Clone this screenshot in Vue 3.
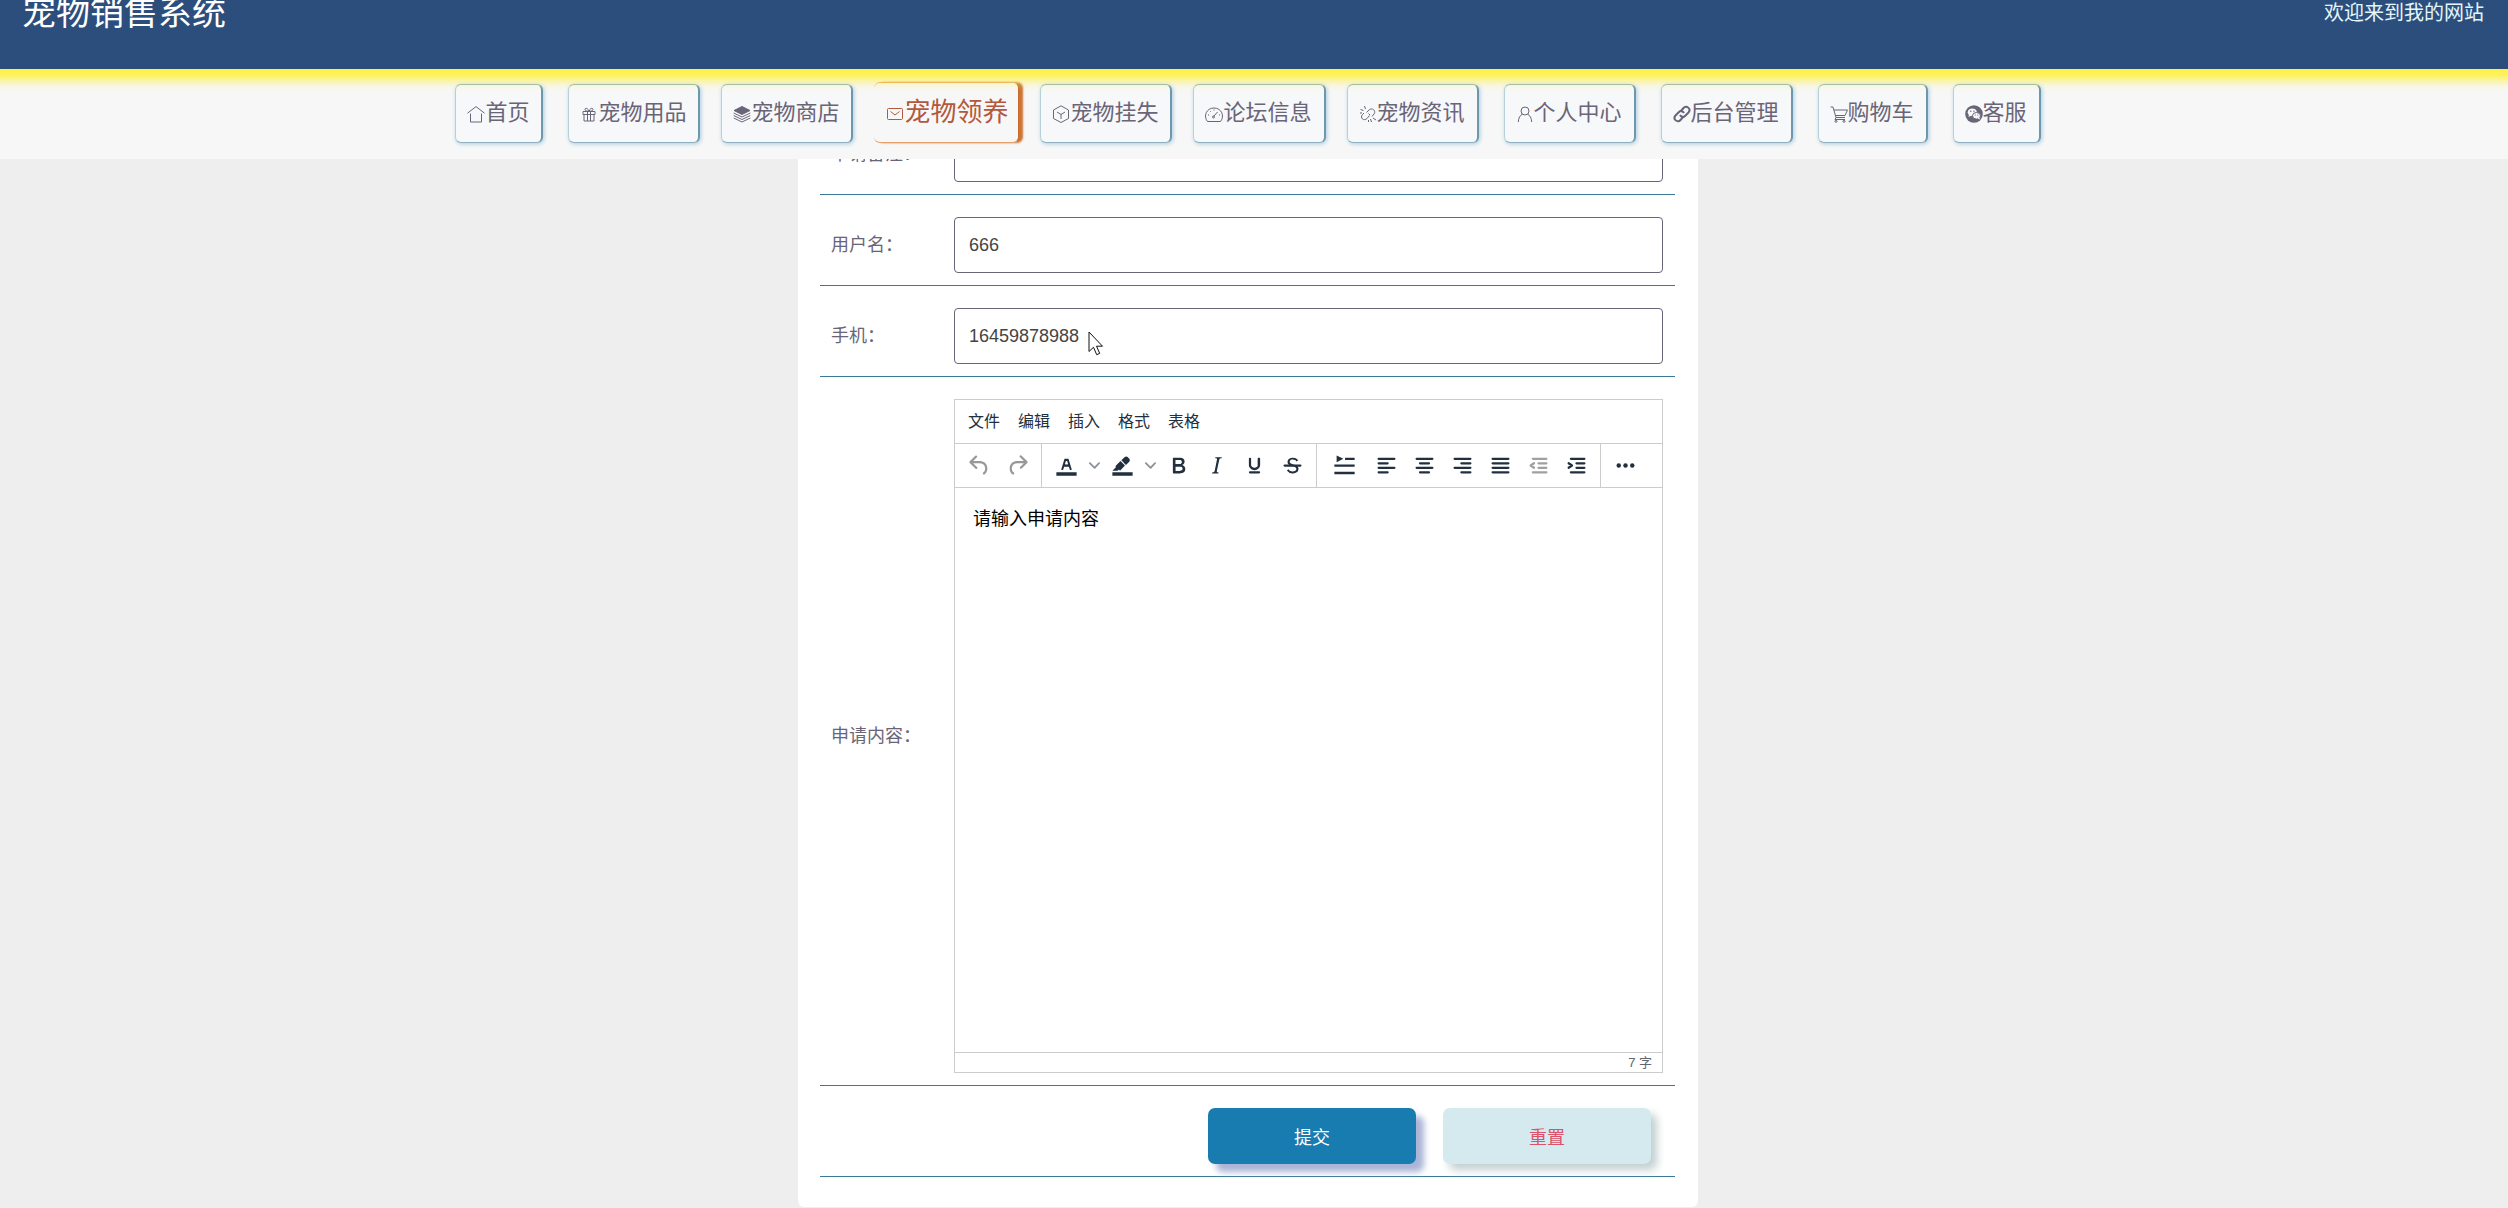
<script setup>
import { ref } from 'vue'

const nav = [
  { text: '首页', icon: 'home' },
  { text: '宠物用品', icon: 'gift' },
  { text: '宠物商店', icon: 'layers', near: true },
  { text: '宠物领养', icon: 'mail', near: true, active: true },
  { text: '宠物挂失', icon: 'box', near: true },
  { text: '论坛信息', icon: 'gauge', near: true },
  { text: '宠物资讯', icon: 'unlink', near: true },
  { text: '个人中心', icon: 'user' },
  { text: '后台管理', icon: 'link' },
  { text: '购物车', icon: 'cart' },
  { text: '客服', icon: 'chat' },
]

const icons = {
  home: '<path d="M.5 8.2 9 1.6l8.500 6.600M3.500 8.600V17h11V8.600"/>',
  gift: '<path d="M3 6.500h12v3H3zM4 9.500h10V16H4zM7.500 6.500V16M10.500 6.500V16M9 6.200C8 3 5 2.500 5 4.500c0 1.300 2 1.700 4 1.700 2 0 4-.4 4-1.700C13 2.500 10 3 9 6.200z"/>',
  layers: '<path fill="currentColor" d="M9 1.500 17 5.500 9 9.500 1 5.500z"/><path d="M.7 8 9 12l8.300-4M.7 10.500 9 14.500l8.300-4M.7 13 9 17l8.300-4"/>',
  mail: '<path d="M2.500 4.500h13a1 1 0 0 1 1 1v9a1 1 0 0 1-1 1h-13a1 1 0 0 1-1-1v-9a1 1 0 0 1 1-1zM4.500 7.500 9 11l4.500-3.500"/>',
  box: '<path d="M9 .8 16.500 5v8.500L9 17.500 1.500 13.500V5zM5 7l4 2.500L13 7M9 9.500v4.500"/>',
  gauge: '<path d="M2.500 16.500C-2 11 1.500 3 9 3s11 8 6.500 13.500zM8.500 11.500l4-4.500M9.500 12a1 1 0 1 1-2 0 1 1 0 0 1 2 0M3 10h1M5 6l.7.7M9 4.500v1M15 10h-1"/>',
  unlink: '<path d="M7.500 7.500 10 5c3-3 7.500 1 5 4l-2 2.500M10.500 10.500 8 13.500c-3 3-7.500-.5-4.500-4L5 8M9.500 8.500 11 10M5.500 1l1 3M1.500 4.500l3 1M1 8h2M11.500 14l1 3M14 13l3 2M9.500 15v2"/>',
  user: '<path d="M13 6a4 4 0 1 1-8 0 4 4 0 0 1 8 0M6.300 9.200C4 10.500 2.500 13 2.300 17M11.700 9.200c2.300 1.300 3.800 3.800 4 7.800"/>',
  link: '<g stroke-width="2"><path d="M7.500 6.500 10.500 3c3-3.500 8 1 5 4.500l-3.500 3.500c-1.500 1.500-4 1-5-1"/><path d="M10.500 11.500 7.500 15c-3 3.500-8-1-5-4.500L6 7c1.500-1.500 4-1 5 1"/></g>',
  cart: '<path d="M.5 2H3l3 10.500h9M3.800 5H17.500L15 10.500H5.500M6 12.500l-1 2h10"/><circle cx="6" cy="16.300" r="1"/><circle cx="14" cy="16.300" r="1"/>',
  chat: '<circle cx="9" cy="9" r="8.800" fill="currentColor" stroke="none"/><g fill="#f7f8f9" stroke="none"><ellipse cx="7.300" cy="7.300" rx="4.600" ry="3.800"/><path d="m4 9-.5 3 3-1.500z"/></g><ellipse cx="11.500" cy="10.800" rx="4" ry="3.300" fill="#f7f8f9"/><path fill="#f7f8f9" stroke="none" d="m12.500 13.500 2.500 1-.5-2z"/><g fill="currentColor" stroke="none"><circle cx="5.800" cy="6.300" r=".7"/><circle cx="9" cy="6.300" r=".7"/><circle cx="10.300" cy="10" r=".6"/><circle cx="12.800" cy="10" r=".6"/></g>',
}

const line = (d) => `<path d="${d}" fill="none" stroke="currentColor" stroke-width="2" stroke-linecap="round" stroke-linejoin="round"/>`
const glyph = {
  undo: '<path d="M6.400 8H12c3.700 0 6.200 2 6.800 5.100.6 2.700-.4 5.600-2.300 6.800a1 1 0 0 1-1-1.800c1.100-.6 1.800-2.700 1.400-4.600-.5-2.100-2.100-3.500-4.900-3.500H6.400l3.300 3.300a1 1 0 1 1-1.400 1.400l-5-5a1 1 0 0 1 0-1.400l5-5a1 1 0 0 1 1.400 1.400L6.400 8z"/>',
  redo: '<path d="M17.600 10H12c-2.800 0-4.400 1.400-4.900 3.500-.4 2 .3 4 1.400 4.600a1 1 0 1 1-1 1.800c-2-1.200-2.900-4.100-2.300-6.800.6-3 3-5.100 6.800-5.100h5.600l-3.300-3.300a1 1 0 1 1 1.400-1.400l5 5a1 1 0 0 1 0 1.400l-5 5a1 1 0 0 1-1.400-1.400l3.300-3.300z"/>',
  color: '<path d="M3 18h18v3H3zM8.700 16h-.8a.5.5 0 0 1-.5-.6l2.700-9c.1-.3.3-.4.5-.4h2.800c.2 0 .4.1.5.4l2.700 9a.5.5 0 0 1-.5.6h-.8a.5.5 0 0 1-.4-.4l-.7-2.200c0-.3-.3-.4-.5-.4h-3.400c-.2 0-.4.1-.5.4l-.7 2.200c0 .3-.2.4-.4.400zm2.600-7.600-.6 2a.5.5 0 0 0 .5.6h1.600a.5.5 0 0 0 .5-.6l-.6-2c0-.3-.3-.4-.5-.4h-.4c-.2 0-.4.1-.5.400z"/>',
  pen: '<path d="M3 18h18v3H3zM7.700 16.700H3l3.300-3.300-.7-.8L10.200 8l4 4.100-4 4.200c-.2.2-.6.2-.8 0l-.6-.7-1.100 1.100zm5-7.500L11 7.400l3-2.900a2 2 0 0 1 2.600 0L18 6c.7.7.7 2 0 2.700l-2.900 2.900-1.800-1.800-.5-.6z"/>',
  bold: '<path d="M7.800 19c-.3 0-.5 0-.6-.2l-.2-.5V5.700c0-.2 0-.4.2-.5l.6-.2h5c1.500 0 2.700.3 3.500 1 .7.6 1.100 1.400 1.100 2.500a3 3 0 0 1-.6 1.900c-.4.6-1 1-1.600 1.200.4.1.9.3 1.300.6s.8.7 1 1.200c.4.4.5 1 .5 1.600 0 1.300-.4 2.300-1.300 3-.8.7-2.100 1-3.800 1H7.800zm5-8.300c.6 0 1.200-.1 1.600-.5.4-.3.6-.7.6-1.300 0-1.100-.8-1.700-2.300-1.700H9.300v3.500h3.400zm.5 6c.7 0 1.300-.1 1.700-.4.4-.4.6-.9.6-1.500s-.2-1-.7-1.400c-.4-.3-1-.4-2-.4H9.400v3.800h4z"/>',
  italic: '<path d="m16.700 4.700-.1.9h-.3c-.6 0-1 0-1.400.3-.3.3-.4.6-.5 1.100l-2.100 9.800v.6c0 .5.4.8 1.400.8h.2l-.2.800H8l.2-.8h.2c1.100 0 1.800-.5 2-1.500l2-9.800.1-.5c0-.6-.4-.8-1.400-.8h-.3l.2-.9h5.800z"/>',
  underline: '<path d="M16 5c.6 0 1 .4 1 1v5.500a4 4 0 0 1-.4 1.800l-1 1.400a5.300 5.300 0 0 1-5.500 1 5 5 0 0 1-1.600-1c-.5-.4-.8-.9-1.100-1.400a4 4 0 0 1-.4-1.800V6c0-.6.4-1 1-1s1 .4 1 1v5.500c0 .3 0 .6.2 1l.6.7a3.300 3.300 0 0 0 2.200.8 3.400 3.400 0 0 0 2.200-.8c.3-.2.4-.5.6-.8V6c0-.6.4-1 1-1zM8 17h8c.6 0 1 .4 1 1s-.4 1-1 1H8a1 1 0 0 1 0-2z"/>',
  strike: '<path d="M15.600 8.500c-.5-.7-1-1.100-1.300-1.300-.6-.4-1.300-.6-2-.6-2.700 0-2.800 1.700-2.800 2.100 0 1.600 1.800 2 3.200 2.300 4.400.9 4.600 2.800 4.600 3.900 0 1.400-.7 4.100-5 4.100A6.200 6.200 0 0 1 7 16.400l1.500-1.100c.4.6 1.600 2 3.700 2 1.600 0 2.500-.4 3-1.200.4-.8.3-2-.8-2.600-.7-.4-1.600-.7-2.900-1-1-.2-3.900-.8-3.900-3.600C7.600 6 10.300 5 12.400 5c2.900 0 4.200 1.600 4.700 2.400l-1.500 1.100z"/><path d="M5 11h14a1 1 0 0 1 0 2H5a1 1 0 0 1 0-2z"/>',
  spacing: '<path d="M5 3v6l6-3zM12.500 5h8.500v2.200h-8.500zM3 11h18v2.200H3zM3 17.500h18v2.200H3z"/>',
  left: line('M5 6h14M5 10h8M5 14h14M5 18h8'),
  center: line('M5 6h14M8 10h8M5 14h14M8 18h8'),
  right: line('M5 6h14M11 10h8M5 14h14M11 18h8'),
  justify: line('M5 6h14M5 10h14M5 14h14M5 18h14'),
  outdent: line('M7 6h12M12 10h7M12 14h7M7 18h12M8 10l-3 2 3 2'),
  indent: line('M7 6h12M12 10h7M12 14h7M7 18h12M5 10l3 2-3 2'),
  more: '<circle cx="6" cy="12" r="2"/><circle cx="12" cy="12" r="2"/><circle cx="18" cy="12" r="2"/>',
}

const groups = [
  [{ icon: 'undo', name: '撤销', off: true }, { icon: 'redo', name: '重做', off: true }],
  [
    { icon: 'color', name: '文字颜色', menu: true },
    { icon: 'pen', name: '背景颜色', menu: true },
    { icon: 'bold', name: '粗体' },
    { icon: 'italic', name: '斜体' },
    { icon: 'underline', name: '下划线' },
    { icon: 'strike', name: '删除线' },
  ],
  [
    { icon: 'spacing', name: '首行缩进', wide: true },
    { icon: 'left', name: '左对齐' },
    { icon: 'center', name: '居中' },
    { icon: 'right', name: '右对齐' },
    { icon: 'justify', name: '两端对齐' },
    { icon: 'outdent', name: '减少缩进', off: true },
    { icon: 'indent', name: '增加缩进' },
  ],
  [{ icon: 'more', name: '更多' }],
]
const menus = ['文件', '编辑', '插入', '格式', '表格']

const remark = ref('')
const user = ref('666')
const phone = ref('16459878988')
const content = ref('请输入申请内容')
</script>

<template>
  <div class="page">
    <header class="top">
      <h1>宠物销售系统</h1>
      <span class="welcome">欢迎来到我的网站</span>
    </header>

    <nav class="nav">
      <a
        v-for="item in nav"
        :key="item.text"
        href="#"
        class="tab"
        :class="{ near: item.near, active: item.active }"
      >
        <svg viewBox="0 0 18 18" aria-hidden="true" v-html="icons[item.icon]"></svg>
        <span>{{ item.text }}</span>
      </a>
    </nav>

    <main class="main">
      <form class="panel" @submit.prevent>
        <div class="row">
          <label for="remark">申请备注：</label>
          <div class="field"><input id="remark" v-model="remark" type="text"></div>
        </div>
        <div class="row">
          <label for="user">用户名：</label>
          <div class="field"><input id="user" v-model="user" type="text"></div>
        </div>
        <div class="row">
          <label for="phone">手机：</label>
          <div class="field">
            <input id="phone" v-model="phone" type="text">
            <svg class="pointer" viewBox="0 0 16 25" aria-hidden="true">
              <path d="M1 1v19.500l4.500-4.200 3.200 7.400 3-1.300-3.200-7.200H14.500z" />
            </svg>
          </div>
        </div>
        <div class="row">
          <label for="content">申请内容：</label>
          <div class="editor">
            <div class="menubar">
              <button v-for="m in menus" :key="m" type="button">{{ m }}</button>
            </div>
            <div class="toolbar">
              <div v-for="(group, i) in groups" :key="i" class="group">
                <template v-for="tool in group" :key="tool.icon">
                  <button
                    type="button"
                    class="tool"
                    :class="{ wide: tool.wide }"
                    :disabled="tool.off"
                    :aria-label="tool.name"
                  >
                    <svg viewBox="0 0 24 24" v-html="glyph[tool.icon]"></svg>
                  </button>
                  <button v-if="tool.menu" type="button" class="drop" :aria-label="tool.name + '菜单'">
                    <svg viewBox="0 0 10 10"><path d="M8.700 2.200c.3-.3.8-.3 1 0 .4.4.4.9 0 1.200L5.700 7.800c-.3.3-.9.3-1.200 0L.2 3.400a.8.8 0 0 1 0-1.200c.3-.3.8-.3 1.100 0L5 6l3.700-3.800z" /></svg>
                  </button>
                </template>
              </div>
            </div>
            <textarea id="content" v-model="content"></textarea>
            <div class="status">{{ content.length }} 字</div>
          </div>
        </div>
        <div class="row actions">
          <button type="submit" class="submit">提交</button>
          <button type="reset" class="reset">重置</button>
        </div>
      </form>
    </main>
  </div>
</template>

<style>
body {
  margin: 0;
  background: #eeeeee;
}
</style>

<style scoped>
.page {
  font-family: "Liberation Sans", "Noto Sans CJK SC", sans-serif;
  font-weight: 400;
  color: #6a6478;
  overflow: hidden;
}
button,
input,
textarea {
  font: inherit;
  box-sizing: border-box;
}
button {
  border: 0;
  background: none;
  padding: 0;
}

.top {
  position: relative;
  z-index: 3;
  height: 112px;
  margin-top: -43px;
  padding: 0 24px 0 22px;
  box-sizing: border-box;
  display: flex;
  align-items: center;
  justify-content: space-between;
  background: #2c4e7d;
  box-shadow: 0 0 10px 11px #fff043;
}
h1 {
  margin: 0;
  font-size: 34px;
  line-height: 40px;
  font-weight: 400;
  color: #fff;
}
.welcome {
  padding-bottom: 4px;
  font-size: 20px;
  color: #e2f6fb;
}

.nav {
  position: relative;
  z-index: 2;
  height: 90px;
  padding: 0 12px 16px 0;
  box-sizing: border-box;
  display: flex;
  justify-content: center;
  align-items: flex-end;
  background: #f7f7f7;
}
.tab {
  height: 59px;
  margin-left: 25px;
  padding: 0 12px 2px 11px;
  box-sizing: border-box;
  display: flex;
  align-items: center;
  border: 1px solid #8fb0c2;
  border-left-color: #b7d0da;
  border-right: 2px solid #6c97ad;
  border-radius: 6px;
  background: #f7f8f9;
  box-shadow: 1px 1px 4px #a9cbe0;
  font-size: 22px;
  line-height: 32px;
  color: #6a6478;
  text-decoration: none;
  white-space: nowrap;
}
.tab:first-child {
  margin-left: 0;
}
.tab.near {
  margin-left: 21px;
}
.tab svg {
  width: 18px;
  height: 18px;
  margin-top: 2px;
  fill: none;
  stroke: currentColor;
  stroke-width: 1;
}
.tab.active {
  height: 61px;
  padding: 0 10px 2px 12px;
  border-color: #e3a06a;
  border-left: 0;
  border-right: 1px solid #c9692a;
  background: #f7f7f7;
  box-shadow: 4px 0 2px #cb7434;
  font-size: 26px;
  color: #b2583c;
}

.main {
  display: flex;
  justify-content: center;
  margin-top: -55px;
  padding-right: 12px;
}
.panel {
  width: 100%;
  max-width: 900px;
  padding: 0 23px 30px 22px;
  box-sizing: border-box;
  background: #fff;
  border-radius: 6px;
}
.row {
  display: flex;
  align-items: center;
  padding: 22px 12px 12px 11px;
  border-bottom: 1px solid #3a7a96;
}
.row label {
  flex: none;
  width: 123px;
  font-size: 18px;
  line-height: 26px;
}
.field {
  position: relative;
  flex: 1;
  display: flex;
}
.field input {
  width: 100%;
  height: 56px;
  padding: 0 14px;
  border: 1px solid #6a6478;
  border-radius: 4px;
  background: #fff;
  font-size: 18px;
  color: #444;
}
.pointer {
  position: absolute;
  left: 134px;
  top: 23px;
  width: 16px;
  height: 25px;
  fill: #fff;
  stroke: #111;
}

.editor {
  flex: 1;
  min-width: 0;
  border: 1px solid #ccc;
  display: flex;
  flex-direction: column;
  color: #222f3e;
}
.menubar {
  display: flex;
  align-items: center;
  gap: 2px;
  height: 43px;
  padding: 0 5px;
  border-bottom: 1px solid #ccc;
}
.menubar button {
  padding: 0 8px;
  font-size: 16px;
  line-height: 24px;
  color: #222f3e;
}
.toolbar {
  display: flex;
  height: 43px;
  border-bottom: 1px solid #ccc;
}
.group {
  display: flex;
  align-items: center;
  padding: 0 5px;
  border-right: 1px solid #ccc;
}
.group:last-child {
  border-right: 0;
}
.tool,
.drop {
  display: flex;
  align-items: center;
  justify-content: center;
  width: 38px;
  height: 38px;
}
.tool.wide {
  width: 45px;
}
.tool svg {
  width: 27px;
  height: 27px;
  fill: #222f3e;
  fill-rule: evenodd;
  color: #222f3e;
}
.tool:disabled svg {
  opacity: 0.5;
  fill: #333;
  color: #444;
}
.drop {
  width: 18px;
}
.drop svg {
  width: 11px;
  height: 11px;
  fill: #8b9198;
}
textarea {
  display: block;
  width: 100%;
  height: 564px;
  padding: 18px;
  border: 0;
  outline: 0;
  resize: none;
  background: #fff;
  font-size: 18px;
  line-height: 26px;
  color: #000;
}
.status {
  height: 19px;
  padding-right: 10px;
  border-top: 1px solid #ccc;
  font-size: 13px;
  line-height: 19px;
  text-align: right;
  color: #5d6570;
}

.actions {
  justify-content: flex-end;
  gap: 27px;
  padding-right: 24px;
}
.actions button {
  width: 208px;
  height: 56px;
  border-radius: 7px;
  font-size: 18px;
}
.actions .submit {
  background: #187cb0;
  color: #fff;
  box-shadow: 8px 8px 6px #aab4d6;
}
.actions .reset {
  background: #d5eaee;
  color: #d9536a;
  box-shadow: 6px 6px 8px #c3cfd1;
}
</style>
